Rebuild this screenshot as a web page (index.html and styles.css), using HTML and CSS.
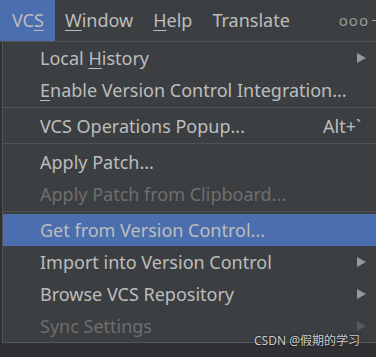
FILE: index.html
```html
<!DOCTYPE html>
<html lang="en">
<head>
  <meta charset="UTF-8" />
  <title>VCS menu</title>
  <link rel="stylesheet" href="styles.css">
</head>
<body>
  <header class="menubar">
    <span class="top-item active">VC<u>S</u></span>
    <span class="top-item"><u>W</u>indow</span>
    <span class="top-item"><u>H</u>elp</span>
    <span class="top-item">Translate</span>
    <span class="top-item more">ooo<i class="dash"></i></span>
  </header>

  <div class="stage">
    <ul class="popup">
      <li class="row sub"><span>Local <u>H</u>istory</span></li>
      <li class="row"><span><u>E</u>nable Version Control Integration...</span></li>
      <li class="sep"></li>
      <li class="row"><span>VCS Operations Popup...</span> <span class="key">Alt+`</span></li>
      <li class="sep"></li>
      <li class="row"><span>Apply Patch...</span></li>
      <li class="row off"><span>Apply Patch from Clipboard...</span></li>
      <li class="sep"></li>
      <li class="row hover"><span>Get from Version Control...</span></li>
      <li class="row sub"><span>Import into Version Control</span></li>
      <li class="row sub"><span>Browse VCS Repository</span></li>
      <li class="row sub off"><span>Sync Settings</span></li>
    </ul>
    <span class="mark">CSDN @假期的学习</span>
  </div>
</body>
</html>
```

FILE: styles.css
```css
body { margin: 0; width: 376px; height: 357px; overflow: hidden; background: #2e3033; font-family: "Noto Sans", "Noto Sans CJK SC", sans-serif; font-size: 18px; color: #bdbdbd; }
u { text-decoration-thickness: 1px; text-underline-offset: 3px; }

.menubar { display: flex; align-items: center; height: 41px; background: #3c3f41; border-bottom: 1px solid #515151; white-space: nowrap; }
.top-item { padding: 0 10px; line-height: 41px; }
.top-item.active { background: #4b6eaf; padding: 0 11px 0 12px; }
.top-item.more { display: flex; align-items: center; margin-left: auto; padding-right: 0; color: #999999; font-size: 15px; letter-spacing: 1px; }
.dash { display: block; width: 4px; height: 1px; margin-left: 3px; background: #999999; }

.stage { position: relative; height: 315px; }
.popup { list-style: none; margin: 0 0 0 2px; padding: 0; background: #3c3f41; border-left: 1px solid #555555; border-bottom: 1px solid #555555; }
.row { display: flex; align-items: center; height: 32px; padding: 0 10px 0 37px; white-space: nowrap; }
.row.off { color: #6e6e6e; }
.row.hover { background: #4b6eaf; }
.row.sub::after { content: ""; margin-left: auto; border-left: 9px solid #9a9a9a; border-top: 5.5px solid transparent; border-bottom: 5.5px solid transparent; }
.row.sub.off::after { border-left-color: #585a5c; }
.key { margin-left: auto; margin-right: 5px; }
.sep { border-top: 1px solid #515151; margin-top: 1px; height: 2px; }

.mark { position: absolute; right: 16px; top: 289px; font-size: 12px; color: #cfcfcf; text-shadow: 0 0 2px #000; }
```
